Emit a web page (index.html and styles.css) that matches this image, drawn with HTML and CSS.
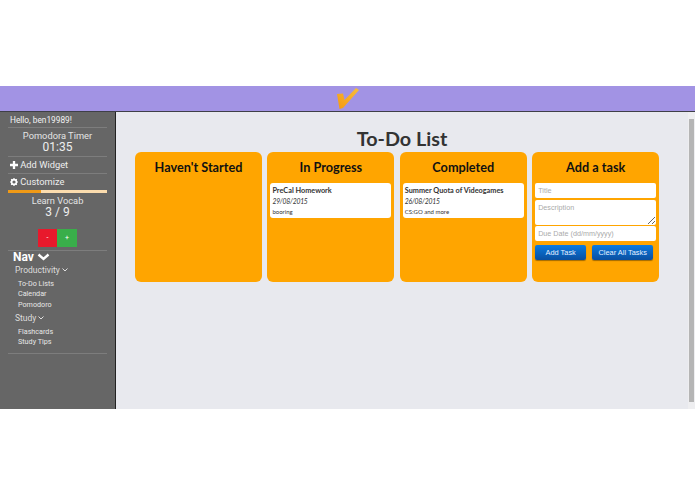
FILE: index.html
```html
<!DOCTYPE html>
<html lang="en">
<head>
<meta charset="utf-8">
<title>To-Do List</title>
<link rel="stylesheet" href="styles.css">
</head>
<body>
<div class="app">
  <header class="topbar">
    <svg class="logo" width="22" height="21" viewBox="0 0 22 21"><defs><linearGradient id="chk" x1="0" y1="1" x2="1" y2="0"><stop offset="0" stop-color="#f59a10"/><stop offset="1" stop-color="#f8bd3c"/></linearGradient></defs><path d="M0 6 L6 5.500 L7.500 12 L19 0 L22 2 L6 20 L2.500 21 Z" fill="url(#chk)"/></svg>
  </header>
  <div class="body-row">
    <aside class="sidebar">
      <div class="hello">Hello, ben19989!</div>
      <div class="widget timer"><div class="w-title">Pomodora Timer</div><div class="w-value">01:35</div></div>
      <div class="side-link">
        <svg class="ico" width="8" height="8" viewBox="0 0 9 9"><path d="M3.200 0h2.600v3.200H9v2.600H5.800V9H3.200V5.800H0V3.200h3.200z" fill="#fff"/></svg>
        Add Widget</div>
      <div class="side-link custom">
        <svg class="ico" width="8" height="8" viewBox="0 0 9 9"><circle cx="4.500" cy="4.500" r="2.700" fill="none" stroke="#fff" stroke-width="1.800"/><path d="M4.500 0v2M4.500 7v2M0 4.500h2M7 4.500h2M1.300 1.300l1.400 1.400M6.300 6.300l1.400 1.400M7.700 1.300L6.300 2.700M2.700 6.300L1.300 7.700" stroke="#fff" stroke-width="1.300"/></svg>
        Customize</div>
      <div class="progress"><div class="progress-fill"></div></div>
      <div class="widget vocab"><div class="w-title">Learn Vocab</div><div class="w-value">3 / 9</div></div>
      <div class="vote"><button class="vote-btn minus">-</button><button class="vote-btn plus">+</button></div>
      <nav class="nav">
        <div class="nav-title">Nav <svg width="13" height="8" viewBox="0 0 13 8"><path d="M1.500 1.500l5 4.500 5-4.500" fill="none" stroke="#fff" stroke-width="2.400"/></svg></div>
        <div class="nav-group">Productivity <svg width="6" height="4" viewBox="0 0 6 4"><path d="M.5.500L3 3 5.500.500" fill="none" stroke="#eee" stroke-width=".9"/></svg></div>
        <ul class="nav-list"><li>To-Do Lists</li><li>Calendar</li><li>Pomodoro</li></ul>
        <div class="nav-group">Study <svg width="6" height="4" viewBox="0 0 6 4"><path d="M.5.500L3 3 5.500.500" fill="none" stroke="#eee" stroke-width=".9"/></svg></div>
        <ul class="nav-list"><li>Flashcards</li><li>Study Tips</li></ul>
      </nav>
    </aside>
    <main class="main">
      <h1 class="page-title">To-Do List</h1>
      <div class="board">
        <section class="col"><h2 class="col-title">Haven't Started</h2></section>
        <section class="col"><h2 class="col-title">In Progress</h2>
          <article class="task"><div class="task-name">PreCal Homework</div><div class="task-date">29/08/2015</div><div class="task-desc">booring</div></article>
        </section>
        <section class="col"><h2 class="col-title">Completed</h2>
          <article class="task"><div class="task-name">Summer Quota of Videogames</div><div class="task-date">26/08/2015</div><div class="task-desc">CS:GO and more</div></article>
        </section>
        <section class="col"><h2 class="col-title">Add a task</h2>
          <form class="task-form">
            <input class="field" placeholder="Title">
            <textarea class="field area" placeholder="Description"></textarea>
            <input class="field" placeholder="Due Date (dd/mm/yyyy)">
            <div class="actions"><button type="button" class="btn add">Add Task</button><button type="button" class="btn clear">Clear All Tasks</button></div>
          </form>
        </section>
      </div>
    </main>
    <div class="scrollbar"><div class="thumb"></div></div>
  </div>
</div>
</body>
</html>
```

FILE: styles.css
```css
* { box-sizing: border-box; }
html, body { margin: 0; height: 100%; background: #fff; overflow: hidden; }
body { padding-top: 86px; }
.app { height: 323px; display: flex; flex-direction: column; }
.topbar { height: 26px; background: #a293e4; border-bottom: 1px solid #3f3f48; display: flex; justify-content: center; align-items: center; }
.logo { display: block; }
.body-row { flex: 1; display: flex; min-height: 0; }

.sidebar { width: 116px; background: #666; border-right: 1px solid #222; padding: 0 8px; color: #eee; font-family: Roboto, sans-serif; }
.hello { height: 16px; padding: 0 2px; font-size: 8.300px; line-height: 16px; border-bottom: 1px solid #7d7d7d; white-space: nowrap; color: #f2f2f2; }
.widget { text-align: center; }
.timer { height: 29px; padding-top: 2px; border-bottom: 1px solid #7d7d7d; }
.w-title { font-size: 9.300px; line-height: 12px; color: #e4e4e4; }
.w-value { font-size: 12px; line-height: 11px; color: #eee; }
.side-link { height: 17px; padding-left: 2px; font-size: 9.300px; line-height: 16px; color: #eee; border-bottom: 1px solid #7d7d7d; white-space: nowrap; }
.side-link.custom { border-bottom: 0; height: 16px; }
.ico { vertical-align: -1px; }
.progress { height: 3px; background: #fbdcae; }
.progress-fill { width: 33%; height: 100%; background: #f09a16; }
.vocab { padding-top: 2px; }
.vote { display: flex; justify-content: center; margin-top: 11px; }
.vote-btn { width: 19px; height: 18px; padding: 0; border: 0; color: #fff; font: 7px/18px Roboto, sans-serif; }
.minus { background: #e8192c; }
.plus { background: #39ae4a; width: 20px; }
.nav { margin-top: 3px; height: 104px; border-top: 1px solid #7d7d7d; border-bottom: 1px solid #7d7d7d; padding: 0 0 0 5px; }
.nav-title { font-size: 12px; line-height: 13px; font-weight: 700; color: #fff; }
.nav-group { margin-left: 2px; font-size: 8.500px; line-height: 12px; color: #ddd; }
.nav-group svg { vertical-align: 1px; }
.nav-list { list-style: none; margin: 3px 0 2px 5px; padding: 0; font-size: 7.200px; line-height: 10.300px; color: #e6e6e6; }

.main { flex: 1; min-width: 0; background: #e8e9ee; padding: 14px 19px 0; font-family: Lato, sans-serif; }
.page-title { margin: 0 0 2px; height: 24px; font-size: 19.800px; line-height: 24px; font-weight: 700; color: #333; text-align: center; }
.board { display: flex; gap: 5.400px; width: 545px; }
.col { flex: none; width: 127px; height: 130px; background: #ffa500; border-radius: 6px; padding: 7px 3px 0; }
.col-title { margin: 0 0 7px; font-size: 12.700px; line-height: 17px; font-weight: 700; color: #111; text-align: center; }
.task { height: 35px; background: #fff; border-radius: 3px; padding: 2px 2px 0; color: #333; }
.task-name { font-size: 7.300px; line-height: 11px; font-weight: 700; }
.task-date { font-size: 6.800px; line-height: 10px; font-style: italic; letter-spacing: -.2px; }
.task-desc { font-size: 6px; line-height: 11px; }

.task-form { display: flex; flex-direction: column; gap: 1.500px; margin-top: 1px; }
.field { display: block; width: 100%; height: 15px; padding: 0 3px; border: 0; border-radius: 2px; background: #fff; font: 7.200px/15px "Liberation Sans", sans-serif; }
.field::placeholder { color: #aaa; opacity: 1; }
.area { height: 25px; padding-top: 3px; line-height: 10px; resize: vertical; }
.actions { display: flex; gap: 6px; margin-top: 2px; }
.btn { height: 15px; padding: 0; border: 0; border-radius: 2px; background: linear-gradient(#0a7be0, #0a4fa0); box-shadow: 0 1px 1px #a26a00; color: #e8f0ff; font: 7.400px/15px "Liberation Sans", sans-serif; }
.add { width: 51px; }
.clear { width: 61px; }

.scrollbar { width: 7px; background: #eeeef0; padding: 7px 1px; }
.thumb { height: 100%; background: #b5b5b5; }
```
